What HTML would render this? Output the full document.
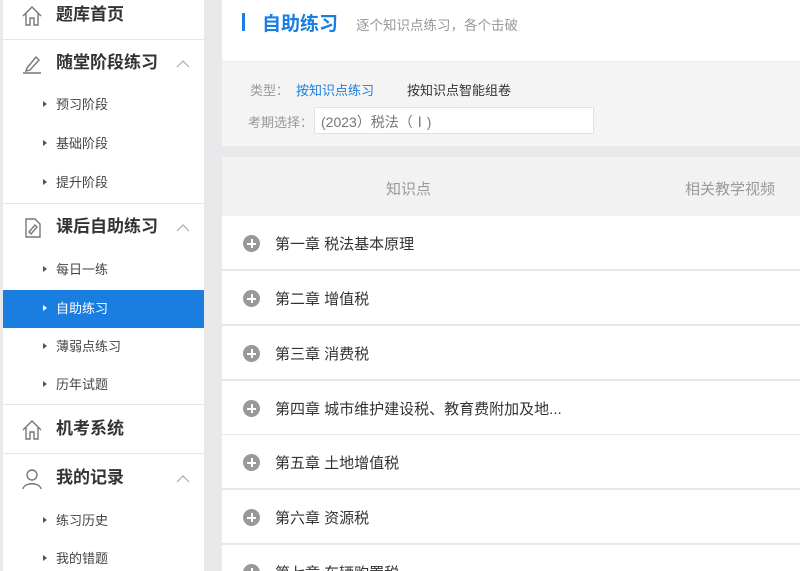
<!DOCTYPE html>
<html><head><meta charset="utf-8"><style>
*{margin:0;padding:0;box-sizing:border-box}
html,body{width:800px;height:571px;overflow:hidden}
body{background:#e9e9eb;font-family:"Liberation Sans","Noto Sans CJK SC",sans-serif;position:relative}
.a{position:absolute}
#side{left:3px;top:0;width:201px;height:571px;background:#fff}
.h{position:absolute;left:0;width:201px;font-size:17px;font-weight:bold;color:#333;line-height:24px}
.h span{position:absolute;left:53px}
.h svg{position:absolute;left:18px;top:2px}
.h .car{position:absolute;left:173px;top:8px}
.s{position:absolute;left:0;width:201px;height:38px;line-height:38px;font-size:13px;color:#444}
.s i{position:absolute;left:40px;top:15px;width:0;height:0;border-left:4px solid #555;border-top:3.5px solid transparent;border-bottom:3.5px solid transparent}
.s span{position:absolute;left:53px}
.s.act{background:#1a7ee0;color:#fff}
.s.act i{border-left-color:#fff}
.d{position:absolute;left:0;width:201px;height:1px;background:#e6e6e6}
.row{position:absolute;left:222px;width:578px;height:54px;background:#fff;border-bottom:1px solid #e8e8e8}
.row .c{position:absolute;left:21px;top:19px;width:17px;height:17px;border-radius:50%;background:#999}
.row .c:before{content:"";position:absolute;left:4px;top:7.5px;width:9px;height:2px;background:#fff}
.row .c:after{content:"";position:absolute;left:7.5px;top:4px;width:2px;height:9px;background:#fff}
.row span{position:absolute;left:53px;top:17px;font-size:15px;color:#333}
</style></head><body>
<div id="side" class="a">
 <div class="h" style="top:3px"><svg width="22" height="22" viewBox="0 0 22 22" fill="none" stroke="#777" stroke-width="1.4"><path d="M2 11 L11 2 L20 11 M5 8 V20 H9 V13 H13 V20 H17 V8"/></svg><span>题库首页</span></div>
 <div class="d" style="top:39px"></div>
 <div class="h" style="top:51px"><svg width="22" height="22" viewBox="0 0 22 22" fill="none" stroke="#777" stroke-width="1.4"><path d="M6 15 L15 4 L18 7 L9 17 L5 18 Z M2 20 H20"/></svg><span>随堂阶段练习</span><svg class="car" width="14" height="10" viewBox="0 0 14 10" fill="none" stroke="#aaa" stroke-width="1.2"><path d="M1 8 L7 2 L13 8"/></svg></div>
 <div class="s" style="top:86px"><i></i><span>预习阶段</span></div>
 <div class="s" style="top:125px"><i></i><span>基础阶段</span></div>
 <div class="s" style="top:164px"><i></i><span>提升阶段</span></div>
 <div class="d" style="top:203px"></div>
 <div class="h" style="top:215px"><svg width="22" height="22" viewBox="0 0 22 22" fill="none" stroke="#777" stroke-width="1.4"><path d="M5 2 H14 L19 7 V20 H5 Z M8 15 L14 8 L16 10 L10 17 Z"/></svg><span>课后自助练习</span><svg class="car" width="14" height="10" viewBox="0 0 14 10" fill="none" stroke="#aaa" stroke-width="1.2"><path d="M1 8 L7 2 L13 8"/></svg></div>
 <div class="s" style="top:251px"><i></i><span>每日一练</span></div>
 <div class="s act" style="top:290px"><i></i><span>自助练习</span></div>
 <div class="s" style="top:328px"><i></i><span>薄弱点练习</span></div>
 <div class="s" style="top:366px"><i></i><span>历年试题</span></div>
 <div class="d" style="top:404px"></div>
 <div class="h" style="top:417px"><svg width="22" height="22" viewBox="0 0 22 22" fill="none" stroke="#777" stroke-width="1.4"><path d="M2 11 L11 2 L20 11 M5 8 V20 H9 V13 H13 V20 H17 V8"/></svg><span>机考系统</span></div>
 <div class="d" style="top:453px"></div>
 <div class="h" style="top:466px"><svg width="22" height="22" viewBox="0 0 22 22" fill="none" stroke="#777" stroke-width="1.4"><circle cx="11" cy="7" r="5"/><path d="M2 21 C3 14 19 14 20 21"/></svg><span>我的记录</span><svg class="car" width="14" height="10" viewBox="0 0 14 10" fill="none" stroke="#aaa" stroke-width="1.2"><path d="M1 8 L7 2 L13 8"/></svg></div>
 <div class="s" style="top:502px"><i></i><span>练习历史</span></div>
 <div class="s" style="top:540px"><i></i><span>我的错题</span></div>
</div>
<div class="a" style="left:222px;top:0;width:578px;height:61px;background:#fff"></div>
<div class="a" style="left:242px;top:13px;width:3px;height:18px;background:#1a7ee0"></div>
<div class="a" style="left:262px;top:9px;font-size:19px;font-weight:bold;color:#1a7ee0">自助练习</div>
<div class="a" style="left:356px;top:14px;font-size:13.5px;color:#999">逐个知识点练习，各个击破</div>
<div class="a" style="left:222px;top:62px;width:578px;height:84px;background:#f4f4f4"></div>
<div class="a" style="left:250px;top:80px;font-size:13px;color:#999">类型：</div>
<div class="a" style="left:296px;top:80px;font-size:13px;color:#1a7ee0">按知识点练习</div>
<div class="a" style="left:407px;top:80px;font-size:13px;color:#333">按知识点智能组卷</div>
<div class="a" style="left:248px;top:112px;font-size:13px;color:#999">考期选择：</div>
<div class="a" style="left:314px;top:107px;width:280px;height:27px;background:#fff;border:1px solid #e2e2e2;font-size:14px;color:#777;padding:4px 0 0 6px">(2023）税法（Ⅰ)</div>
<div class="a" style="left:222px;top:157px;width:578px;height:59px;background:#f2f2f2"></div>
<div class="a" style="left:386px;top:178px;font-size:15px;color:#999">知识点</div>
<div class="a" style="left:685px;top:178px;font-size:15px;color:#999">相关教学视频</div>
<div class="row" style="top:216px"><div class="c"></div><span>第一章 税法基本原理</span></div>
<div class="row" style="top:271px"><div class="c"></div><span>第二章 增值税</span></div>
<div class="row" style="top:326px"><div class="c"></div><span>第三章 消费税</span></div>
<div class="row" style="top:381px"><div class="c"></div><span>第四章 城市维护建设税、教育费附加及地...</span></div>
<div class="row" style="top:435px"><div class="c"></div><span>第五章 土地增值税</span></div>
<div class="row" style="top:490px"><div class="c"></div><span>第六章 资源税</span></div>
<div class="row" style="top:545px"><div class="c"></div><span>第七章 车辆购置税</span></div>
</body></html>
